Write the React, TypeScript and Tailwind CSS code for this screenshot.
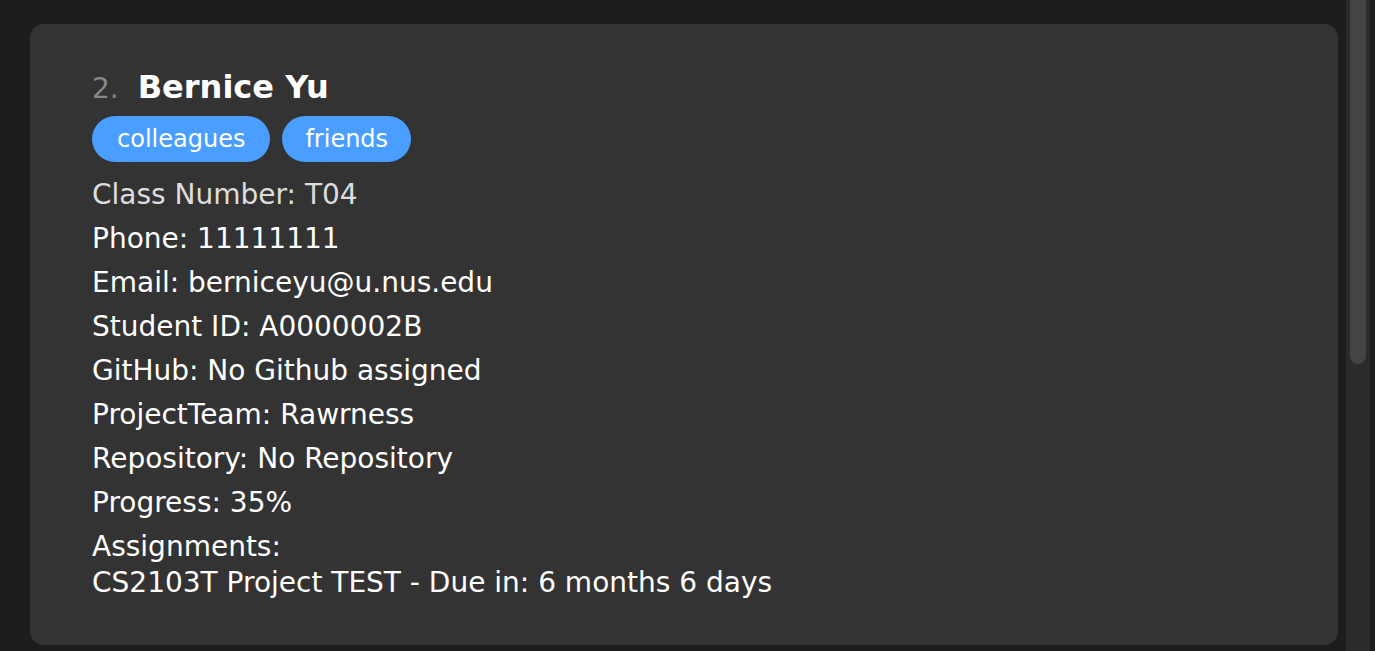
import React from "react";

export default function App() {
  const lines = [
    "Phone: 11111111",
    "Email: berniceyu@u.nus.edu",
    "Student ID: A0000002B",
    "GitHub: No Github assigned",
    "ProjectTeam: Rawrness",
    "Repository: No Repository",
    "Progress: 35%",
  ];
  return (
    <div
      className="flex h-[651px] w-[1375px] overflow-hidden bg-[#1d1d1d]"
      style={{ fontFamily: '"DejaVu Sans", sans-serif' }}
    >
      <div className="flex-1 pl-[30px] pr-[8px] pt-[24px]">
        <div className="h-[621px] rounded-[14px] bg-[#333333] pl-[62px] pt-[43px]">
          <div className="flex items-baseline leading-[40px]">
            <span className="text-[28px] text-[#888888]">2.</span>
            <span className="ml-[19px] text-[32px] font-bold text-white">Bernice Yu</span>
          </div>
          <div className="mt-[7px] flex gap-[12px]">
            <span className="flex h-[46px] items-center rounded-full bg-[#4a9eff] px-[25px] text-[24px] text-white">colleagues</span>
            <span className="flex h-[46px] items-center rounded-full bg-[#4a9eff] px-[23px] text-[24px] text-white">friends</span>
          </div>
          <div className="mt-[11px] text-[28px] leading-[44px] text-[#dddddd]">Class Number: T04</div>
          {lines.map((l) => (
            <div key={l} className="text-[28px] leading-[44px] text-white">
              {l}
            </div>
          ))}
          <div className="mt-[4px] text-[28px] leading-[36px] text-white">
            Assignments:
            <br />
            CS2103T Project TEST - Due in: 6 months 6 days
          </div>
        </div>
      </div>
      <div className="w-[24px] bg-[#2b2b2b] px-[4px]">
        <div className="h-[364px] rounded-b-[8px] bg-[#444444]" />
      </div>
      <div className="w-[5px] bg-[#1d1d1d]" />
    </div>
  );
}
